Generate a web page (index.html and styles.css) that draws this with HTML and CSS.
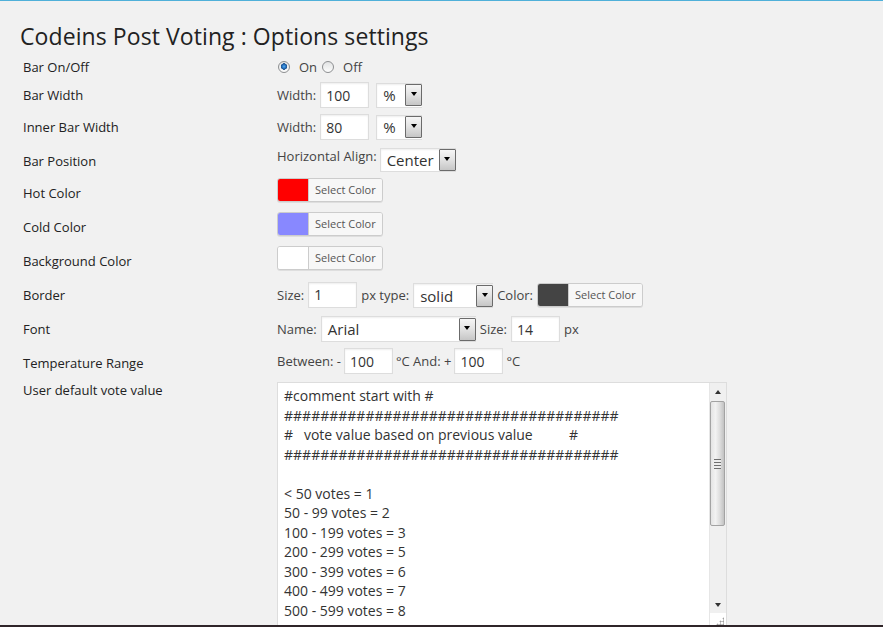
FILE: index.html
```html
<!DOCTYPE html>
<html>
<head>
<meta charset="utf-8">
<title>Codeins Post Voting : Options settings</title>
<link rel="stylesheet" href="styles.css">
</head>
<body>
<div class="page">
  <h2 class="title">Codeins Post Voting : Options settings</h2>
  <div class="form">
    <div class="row r1">
      <div class="label">Bar On/Off</div>
      <div class="ctl">
        <input type="radio" name="bar" class="radio" checked><span class="opt on">On</span>
        <input type="radio" name="bar" class="radio"><span class="opt">Off</span>
      </div>
    </div>
    <div class="row r2">
      <div class="label">Bar Width</div>
      <div class="ctl">
        <span class="txt">Width:</span>
        <input type="text" class="num" value="100">
        <div class="select sel-unit"><span class="val">%</span><span class="arrow"></span></div>
      </div>
    </div>
    <div class="row r3">
      <div class="label">Inner Bar Width</div>
      <div class="ctl">
        <span class="txt">Width:</span>
        <input type="text" class="num" value="80">
        <div class="select sel-unit"><span class="val">%</span><span class="arrow"></span></div>
      </div>
    </div>
    <div class="row r4">
      <div class="label">Bar Position</div>
      <div class="ctl">
        <span class="txt ha">Horizontal Align:</span>
        <div class="select sel-align"><span class="val">Center</span><span class="arrow"></span></div>
      </div>
    </div>
    <div class="row r5">
      <div class="label">Hot Color</div>
      <div class="ctl">
        <div class="color-btn"><span class="swatch hot"></span><span class="btn-text">Select Color</span></div>
      </div>
    </div>
    <div class="row r6">
      <div class="label">Cold Color</div>
      <div class="ctl">
        <div class="color-btn"><span class="swatch cold"></span><span class="btn-text">Select Color</span></div>
      </div>
    </div>
    <div class="row r7">
      <div class="label">Background Color</div>
      <div class="ctl">
        <div class="color-btn"><span class="swatch bg"></span><span class="btn-text">Select Color</span></div>
      </div>
    </div>
    <div class="row r8">
      <div class="label">Border</div>
      <div class="ctl">
        <span class="txt">Size:</span>
        <input type="text" class="num" value="1">
        <span class="txt">px type:</span>
        <div class="select sel-type"><span class="val">solid</span><span class="arrow"></span></div>
        <span class="txt">Color:</span>
        <div class="color-btn"><span class="swatch border"></span><span class="btn-text">Select Color</span></div>
      </div>
    </div>
    <div class="row r9">
      <div class="label">Font</div>
      <div class="ctl">
        <span class="txt">Name:</span>
        <div class="select sel-font"><span class="val">Arial</span><span class="arrow"></span></div>
        <span class="txt">Size:</span>
        <input type="text" class="num" value="14">
        <span class="txt">px</span>
      </div>
    </div>
    <div class="row r10">
      <div class="label">Temperature Range</div>
      <div class="ctl">
        <span class="txt">Between: -</span>
        <input type="text" class="num" value="100">
        <span class="txt">°C And: +</span>
        <input type="text" class="num" value="100">
        <span class="txt">°C</span>
      </div>
    </div>
    <div class="row r11">
      <div class="label">User default vote value</div>
      <div class="ctl">
        <div class="ta-box">
          <textarea class="ta" readonly>#comment start with #
#####################################
#   vote value based on previous value          #
#####################################

&lt; 50 votes = 1
50 - 99 votes = 2
100 - 199 votes = 3
200 - 299 votes = 5
300 - 399 votes = 6
400 - 499 votes = 7
500 - 599 votes = 8
600 - 699 votes = 9
&gt; 700 votes = 10</textarea>
          <div class="sb">
            <div class="sb-btn"><span class="tri-up"></span></div>
            <div class="thumb"><span class="grip"></span></div>
            <div class="track"></div>
            <div class="sb-btn down"><span class="tri-down"></span></div>
            <div class="corner"><span class="dots"></span></div>
          </div>
        </div>
      </div>
    </div>
  </div>
</div>
</body>
</html>
```
FILE: styles.css
```css
html, body {
  margin: 0;
  padding: 0;
  overflow: hidden;
}
body {
  background: #f1f1f1;
  font-family: "Open Sans", "Liberation Sans", sans-serif;
  color: #222;
  border-top: 1px solid #4fb0d9;
  border-bottom: 2px solid #2f2529;
}
.page {
  height: 624px;
  overflow: hidden;
  padding: 21px 0 0 20px;
  box-sizing: border-box;
}
.title {
  margin: 0;
  font-size: 23px;
  line-height: 28px;
  font-weight: 400;
  letter-spacing: 0.08px;
  color: #222;
}
.form {
  display: flex;
  flex-direction: column;
}
.row {
  display: flex;
  flex: none;
}
.label {
  flex: 0 0 257px;
  box-sizing: border-box;
  padding: 7px 0 0 3px;
  font-size: 13px;
  line-height: 20px;
  color: #222;
}
.ctl {
  display: flex;
  align-items: center;
  align-self: flex-start;
  gap: 4px;
  font-size: 13px;
  color: #444;
}
.txt { line-height: 20px; white-space: nowrap; }

.r1 { height: 28px; }
.r1 .ctl { padding-top: 7px; height: 20px; gap: 0; }
.r2 { height: 32px; }
.r2 .ctl { padding-top: 4px; }
.r3 { height: 34px; }
.r3 .ctl { padding-top: 4px; }
.r4 { height: 32px; }
.r4 .ctl { padding-top: 4px; align-items: flex-start; gap: 3px; }
.r5, .r6, .r7 { height: 34px; }
.r5 .ctl, .r6 .ctl, .r7 .ctl { padding-top: 2px; }
.r8 { height: 34px; }
.r8 .ctl { padding-top: 3px; }
.r9 { height: 34px; }
.r9 .ctl { padding-top: 4px; }
.r10 { height: 34px; }
.r10 .ctl { padding-top: 2px; gap: 3px; }
.r11 .label { padding-top: 0; }
.r11 .ctl { padding-top: 2px; }

.ha { line-height: 16px; }

/* radios */
.radio {
  -webkit-appearance: none;
  appearance: none;
  width: 12px;
  height: 12px;
  margin: 0 9px 0 1px;
  border-radius: 50%;
  border: 1px solid #8d8f91;
  box-sizing: border-box;
  background: linear-gradient(#e2e3e4, #fcfcfc);
}
.radio:checked {
  background:
    radial-gradient(circle at 50% 45%, #58b0f0 0, #2a78c8 1.6px, #1b4f8a 3px, rgba(255,255,255,0) 3.4px),
    linear-gradient(#e2e3e4, #fcfcfc);
}
.opt { line-height: 20px; color: #444; }
.opt.on { margin-right: 4px; }

/* text inputs */
.num {
  width: 49px;
  height: 26px;
  box-sizing: border-box;
  margin: 0;
  padding: 0 5px;
  border: 1px solid #ddd;
  background: #fff;
  box-shadow: inset 0 1px 2px rgba(0,0,0,0.07);
  font-family: "Open Sans", "Liberation Sans", sans-serif;
  font-size: 14px;
  color: #333;
  outline: none;
}

/* selects */
.select {
  display: flex;
  align-items: center;
  height: 25px;
  box-sizing: border-box;
  border: 1px solid #ddd;
  border-right: 0;
  background: #fff;
  box-shadow: inset 0 1px 2px rgba(0,0,0,0.07);
  padding-left: 6px;
  font-size: 15px;
  color: #333;
}
.select .val { flex: 1; line-height: 20px; }
.arrow {
  flex: none;
  width: 17px;
  height: 22px;
  box-sizing: border-box;
  border: 1px solid #6b6b6b;
  border-radius: 1px;
  background: linear-gradient(#f6f6f6, #e4e4e4 45%, #c6c6c6);
  display: flex;
  align-items: center;
  justify-content: center;
}
.arrow::after {
  content: "";
  width: 0;
  height: 0;
  border-left: 3.5px solid transparent;
  border-right: 3.5px solid transparent;
  border-top: 4px solid #000;
  margin-bottom: 2px;
}
.sel-unit { width: 46px; margin-left: 3px; }
.sel-align { width: 76px; height: 24px; }
.sel-type { width: 80px; margin-top: 2px; }
.sel-font { width: 155px; height: 26px; }
.sel-font .arrow { height: 23px; }

/* color picker buttons */
.color-btn {
  display: flex;
  height: 24px;
  box-sizing: border-box;
  border: 1px solid #ccc;
  border-radius: 3px;
  box-shadow: 0 1px 0 rgba(0,0,0,0.08);
  overflow: hidden;
  background: #f7f7f7;
}
.swatch { width: 30px; flex: none; }
.swatch.hot { background: #ff0000; }
.swatch.cold { background: #8888ff; }
.swatch.bg { background: #ffffff; }
.swatch.border { background: #444444; }
.btn-text {
  border-left: 1px solid #ccc;
  padding: 0 6px;
  font-size: 11px;
  line-height: 22px;
  color: #555;
  background: #f7f7f7;
}

/* textarea */
.ta-box {
  display: flex;
  width: 450px;
  height: 246px;
  box-sizing: border-box;
  border: 1px solid #ddd;
  background: #fff;
}
.ta {
  flex: 1;
  border: 0;
  margin: 0;
  padding: 3px 6px;
  resize: none;
  overflow: hidden;
  white-space: pre;
  font-family: "Open Sans", "Liberation Sans", sans-serif;
  font-size: 14px;
  line-height: 19.5px;
  color: #333;
  background: #fff;
  outline: none;
}
.sb {
  flex: 0 0 16px;
  display: flex;
  flex-direction: column;
  background: #f0f0f0;
  border-left: 1px solid #e6e6e6;
}
.sb-btn {
  height: 18px;
  flex: none;
  display: flex;
  align-items: center;
  justify-content: center;
}
.sb-btn.down { height: 17px; }
.tri-up {
  width: 0; height: 0;
  border-left: 3.5px solid transparent;
  border-right: 3.5px solid transparent;
  border-bottom: 4px solid #333;
}
.tri-down {
  width: 0; height: 0;
  border-left: 3.5px solid transparent;
  border-right: 3.5px solid transparent;
  border-top: 4px solid #333;
}
.thumb {
  flex: none;
  height: 125px;
  margin: 0 1px 0 0;
  box-sizing: border-box;
  border: 1px solid #a3a3a3;
  border-radius: 2px;
  background: linear-gradient(to right, #e4e4e4, #f2f2f2 35%, #dcdcdc 70%, #c2c2c2);
  display: flex;
  align-items: center;
  justify-content: center;
}
.grip {
  width: 7px;
  height: 10px;
  background: repeating-linear-gradient(#6f6f6f 0 1px, #ececec 1px 3px);
}
.track { flex: 1; }
.corner {
  height: 14px;
  flex: none;
  background: #fff;
  display: flex;
  justify-content: flex-end;
  align-items: flex-end;
}
.dots {
  width: 8px;
  height: 8px;
  margin: 0 2px 2px 0;
  background: radial-gradient(circle, #a0a0a0 0.9px, rgba(0,0,0,0) 1.2px) 0 0 / 3px 3px;
  clip-path: polygon(100% 0, 100% 100%, 0 100%);
}
```
